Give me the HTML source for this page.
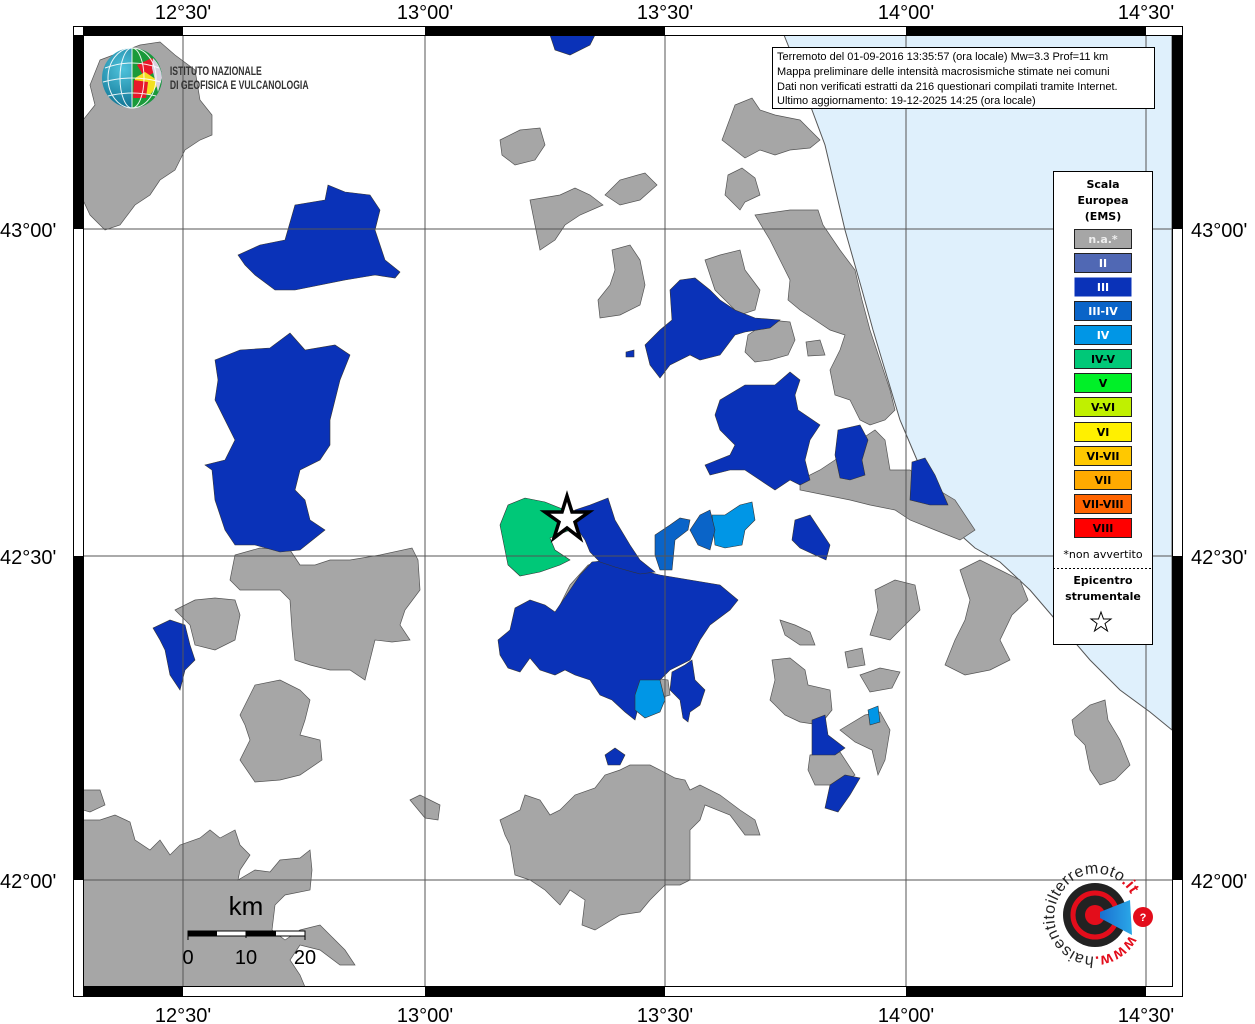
<!DOCTYPE html>
<html><head><meta charset="utf-8"><style>
html,body{margin:0;padding:0;background:#fff;}
svg{display:block;font-family:"Liberation Sans",sans-serif;}
</style></head><body>
<svg width="1255" height="1024" viewBox="0 0 1255 1024" xmlns="http://www.w3.org/2000/svg">
<defs>
<clipPath id="map"><rect x="83" y="35" width="1089" height="952"/></clipPath>
<radialGradient id="glb" cx="0.35" cy="0.35" r="0.7"><stop offset="0" stop-color="#4fc3dc"/><stop offset="1" stop-color="#0b6e8e"/></radialGradient>
<linearGradient id="cone" x1="0" x2="1"><stop offset="0" stop-color="#1a6fd0"/><stop offset="1" stop-color="#2aa8e8"/></linearGradient>
<path id="circ" d="M1129.6,935 A40,40 0 1,1 1060.4,895 A40,40 0 1,1 1129.6,935"/>
</defs>
<g clip-path="url(#map)">
<rect x="83" y="35" width="1089" height="952" fill="#fff"/>
<polygon fill="#dff0fc" stroke="#555" stroke-width="1" points="784,35 800,75 812,110 825,145 845,230 862,290 873,330 885,370 900,420 917,460 935,500 955,530 975,548 1000,562 1030,590 1060,625 1090,660 1120,690 1150,712 1172,730 1172,35"/>
<g fill="#a6a6a6" stroke="#555" stroke-width="0.7">
<polygon points="100,60 140,45 160,42 175,55 195,70 200,100 212,115 212,135 200,140 185,150 175,170 160,180 150,195 135,205 120,225 105,230 90,215 83,200 83,120 95,105 90,85"/>
<polygon points="500,140 520,130 540,128 545,145 535,160 515,165 502,155"/>
<polygon points="530,200 560,195 575,188 590,195 603,205 580,215 565,225 555,240 540,250 535,225"/>
<polygon points="605,195 620,180 645,173 657,185 640,200 620,205"/>
<polygon points="612,250 630,245 640,260 645,285 640,305 620,315 600,318 598,300 610,285 615,270"/>
<polygon points="735,105 752,98 760,110 775,115 800,120 820,140 810,148 790,150 775,155 760,150 745,158 722,140"/>
<polygon points="728,175 742,168 755,178 760,195 745,202 740,210 725,195"/>
<polygon points="755,215 790,210 818,210 823,225 840,250 855,270 862,300 870,330 880,360 890,390 895,410 885,420 870,425 860,420 850,400 835,395 830,370 840,350 845,335 830,330 815,320 800,310 788,300 790,280 780,260 770,240"/>
<polygon points="705,260 720,255 740,250 745,270 760,290 755,310 740,315 725,300 715,290"/>
<polygon points="748,335 770,320 790,322 795,340 788,355 770,360 755,362 745,352"/>
<polygon points="806,342 820,340 825,355 808,356"/>
<polygon points="835,460 860,440 875,430 885,440 890,470 910,470 930,485 955,500 975,530 960,540 935,530 910,520 895,510 870,505 850,500 825,495 800,490 800,480 820,470"/>
<polygon points="235,555 260,548 290,550 300,565 315,565 330,560 350,560 380,555 412,548 418,560 420,590 405,610 400,625 410,640 392,642 375,640 365,680 350,670 330,670 310,665 295,660 292,630 290,600 280,590 240,590 230,580"/>
<polygon points="175,610 195,600 215,598 235,600 240,615 235,640 215,650 195,645 190,625"/>
<polygon points="240,715 255,685 280,680 300,690 310,700 305,720 300,735 320,740 322,760 300,775 280,780 255,782 240,760 250,740 245,725"/>
<polygon points="410,800 420,795 440,805 438,820 425,818"/>
<polygon points="83,790 100,790 105,805 90,812 83,810"/>
<polygon points="83,820 100,820 115,815 130,822 135,840 150,850 160,840 170,855 180,845 200,838 210,830 220,838 235,830 240,845 250,855 240,870 238,880 255,870 270,872 280,860 300,858 310,850 312,870 310,890 285,895 275,905 272,930 285,940 300,930 320,925 345,950 355,965 340,965 320,950 300,945 290,960 300,975 305,987 83,987"/>
<polygon points="555,615 570,585 588,565 605,560 618,570 600,580 585,595 570,612 565,620"/>
<polygon points="655,678 668,680 670,695 660,698"/>
<polygon points="875,590 895,580 915,585 920,610 905,625 890,640 870,635 878,610"/>
<polygon points="960,570 980,560 1000,570 1020,580 1028,600 1012,615 1000,640 1010,660 990,670 965,675 945,665 955,640 965,620 970,600"/>
<polygon points="780,620 795,625 810,632 815,645 800,645 785,635"/>
<polygon points="845,652 862,648 865,665 848,668"/>
<polygon points="860,675 880,668 900,672 892,688 870,692"/>
<polygon points="772,660 790,658 805,670 808,685 830,690 832,710 820,725 800,722 785,715 770,700 775,680"/>
<polygon points="810,755 840,752 855,775 840,785 815,785 808,770"/>
<polygon points="840,730 865,715 880,712 890,730 885,760 878,775 872,750 855,742"/>
<polygon points="1072,720 1090,705 1105,700 1108,720 1120,740 1130,765 1115,780 1100,785 1090,770 1085,745 1075,735"/>
<polygon points="500,820 520,810 525,795 540,800 550,815 560,810 575,795 595,788 605,775 620,770 630,765 650,765 660,770 675,778 685,780 690,790 700,785 720,795 740,810 755,820 760,835 745,835 730,815 705,805 700,820 690,830 690,880 680,885 665,885 650,900 640,912 620,915 595,930 582,925 585,900 570,890 560,905 545,890 530,880 515,875 510,845 505,835"/>
</g>
<g fill="#0a32b8" stroke="#333" stroke-width="0.6">
<polygon points="550,35 595,35 590,45 570,55 555,50"/>
<polygon points="238,255 260,245 285,240 295,205 325,200 328,185 345,192 370,195 380,210 375,230 385,260 400,272 395,278 375,275 345,280 320,285 295,290 275,290 255,275 245,265"/>
<polygon points="215,360 240,350 270,348 290,333 305,350 335,345 350,355 340,380 335,400 330,420 330,445 320,460 300,470 295,490 305,500 310,520 325,530 300,550 280,552 255,545 235,545 225,530 215,500 212,470 205,465 225,460 235,440 225,420 215,400 218,380"/>
<polygon points="153,628 170,620 185,625 190,645 195,660 185,670 180,690 170,675 165,650 160,640"/>
<polygon points="555,612 570,590 580,575 592,562 610,560 620,568 640,570 660,575 690,580 720,585 738,600 730,610 710,625 700,640 690,660 670,670 660,680 645,685 640,700 635,720 625,712 612,700 600,695 590,680 575,675 565,670 555,675 540,670 530,658 520,672 508,668 500,655 498,640 510,630 515,608 530,600 545,605"/>
<polygon points="575,510 590,505 608,498 615,520 630,545 640,560 655,572 640,574 615,567 600,562 590,552 585,540 578,530"/>
<polygon points="672,672 685,665 692,660 695,680 705,690 700,705 690,712 688,722 683,718 680,700 670,690"/>
<polygon points="605,755 615,748 625,755 620,765 608,765"/>
<polygon points="670,290 680,280 695,278 710,290 720,300 735,310 755,318 780,320 770,328 745,332 735,335 720,355 700,360 690,355 670,365 660,378 650,365 645,345 660,330 672,320"/>
<polygon points="626,352 634,350 634,357 626,357"/>
<polygon points="720,400 745,385 775,385 790,372 800,380 795,395 798,410 820,425 810,440 805,460 810,480 800,485 790,480 775,490 760,480 745,470 730,470 710,475 705,465 730,455 735,445 720,430 715,415"/>
<polygon points="838,430 860,425 868,440 862,460 865,475 850,480 840,478 835,455"/>
<polygon points="912,462 925,458 935,475 948,505 930,505 910,500"/>
<polygon points="795,520 810,515 820,530 830,545 826,560 815,555 800,548 792,540"/>
<polygon points="812,720 825,715 828,735 845,748 835,755 812,755"/>
<polygon points="830,785 845,775 860,778 850,795 838,812 825,808"/>
</g>
<g stroke="#333" stroke-width="0.6">
<polygon fill="#00c878" points="508,505 525,498 545,502 565,510 575,520 570,530 550,538 555,550 570,560 560,565 540,572 520,576 508,565 503,540 500,525"/>
<polygon fill="#0096e6" points="640,680 660,680 665,700 660,712 645,718 635,710 635,695"/>
<polygon fill="#0096e6" points="712,515 725,515 740,505 752,502 755,520 745,530 742,545 725,548 715,545"/>
<polygon fill="#0096e6" points="868,710 878,706 880,722 870,725"/>
<polygon fill="#0a64c8" points="655,535 670,525 680,518 690,520 688,530 675,540 672,570 660,570 655,555"/>
<polygon fill="#0a64c8" points="700,515 710,510 715,530 710,550 698,545 690,530"/>
</g>
<g stroke="#555" stroke-width="1" fill="none">
<line x1="183" y1="35" x2="183" y2="987"/><line x1="425" y1="35" x2="425" y2="987"/><line x1="665" y1="35" x2="665" y2="987"/><line x1="906" y1="35" x2="906" y2="987"/><line x1="1146" y1="35" x2="1146" y2="987"/>
<line x1="83" y1="229" x2="1172" y2="229"/><line x1="83" y1="556" x2="1172" y2="556"/><line x1="83" y1="880" x2="1172" y2="880"/>
</g>
<polygon points="567,496 572,512 589,512 575,522 580,538 567,528 554,538 559,522 545,512 562,512" fill="#fff" stroke="#000" stroke-width="3.5"/>
</g>
<rect x="73.5" y="26.5" width="1109" height="970" fill="none" stroke="#000" stroke-width="1"/>
<rect x="83.5" y="35.5" width="1089" height="951" fill="none" stroke="#000" stroke-width="1"/>
<g fill="#000">
<rect x="83" y="26" width="100" height="9"/><rect x="425" y="26" width="240" height="9"/><rect x="906" y="26" width="240" height="9"/>
<rect x="83" y="987" width="100" height="10"/><rect x="425" y="987" width="240" height="10"/><rect x="906" y="987" width="240" height="10"/>
<rect x="73" y="35" width="10" height="194"/><rect x="73" y="556" width="10" height="324"/>
<rect x="1172" y="35" width="10" height="194"/><rect x="1172" y="556" width="10" height="324"/>
</g>
<g font-size="20" fill="#000" text-anchor="middle">
<text x="183" y="19">12°30'</text><text x="425" y="19">13°00'</text><text x="665" y="19">13°30'</text><text x="906" y="19">14°00'</text><text x="1146" y="19">14°30'</text>
<text x="183" y="1022">12°30'</text><text x="425" y="1022">13°00'</text><text x="665" y="1022">13°30'</text><text x="906" y="1022">14°00'</text><text x="1146" y="1022">14°30'</text>
</g>
<g font-size="20" fill="#000">
<text x="0" y="237">43°00'</text><text x="0" y="564">42°30'</text><text x="0" y="888">42°00'</text>
<text x="1191" y="237">43°00'</text><text x="1191" y="564">42°30'</text><text x="1191" y="888">42°00'</text>
</g>
<circle cx="132" cy="78" r="30" fill="url(#glb)"/>
<path d="M132,48 A30,30 0 0,1 162,78 A30,30 0 0,1 132,108 Z" fill="#1a9a3a"/>
<path d="M137,65 L152,58 L158,70 L145,78 Z" fill="#e8182a"/>
<path d="M135,78 L145,72 L160,82 L150,95 L135,92 Z" fill="#f3e020"/>
<path d="M134,80 L148,82 L146,98 L133,98 Z" fill="#e8182a"/>
<path d="M153,58 A30,30 0 0,1 162,78 L158,92 L152,68 Z" fill="#d8d0e0"/>
<g stroke="#fff" stroke-width="1" fill="none" opacity="0.9">
<ellipse cx="132" cy="78" rx="12" ry="30"/><ellipse cx="132" cy="78" rx="24" ry="30"/><line x1="132" y1="48" x2="132" y2="108"/>
<path d="M105,68 Q132,58 159,68"/><path d="M103,82 Q132,74 161,82"/><path d="M108,96 Q132,90 156,96"/>
</g>
<g font-size="12" fill="#333" font-weight="bold" transform="scale(0.72,1)">
<text x="236" y="75">ISTITUTO NAZIONALE</text><text x="236" y="89">DI GEOFISICA E VULCANOLOGIA</text>
</g>
<rect x="772.5" y="47.5" width="382" height="61" fill="#fff" stroke="#000"/>
<g font-size="11" fill="#000">
<text x="777" y="60">Terremoto del 01-09-2016 13:35:57 (ora locale) Mw=3.3 Prof=11 km</text>
<text x="777" y="75">Mappa preliminare delle intensità macrosismiche stimate nei comuni</text>
<text x="777" y="90">Dati non verificati estratti da 216 questionari compilati tramite Internet.</text>
<text x="777" y="104">Ultimo aggiornamento: 19-12-2025 14:25 (ora locale)</text>
</g>
<rect x="1053.5" y="171.5" width="99" height="473" fill="#fff" stroke="#000"/>
<g font-family="DejaVu Sans,sans-serif" font-size="11" font-weight="bold" text-anchor="middle" fill="#000">
<text x="1103" y="188">Scala</text><text x="1103" y="204">Europea</text><text x="1103" y="220">(EMS)</text>
</g>
<g stroke="#222" stroke-width="1">
<rect x="1074.5" y="229.5" width="57" height="19" fill="#a6a6a6"/>
<rect x="1074.5" y="253.5" width="57" height="19" fill="#5068b4"/>
<rect x="1074.5" y="277.5" width="57" height="19" fill="#0a32b8" stroke="none"/>
<rect x="1074.5" y="301.5" width="57" height="19" fill="#0a64c8"/>
<rect x="1074.5" y="325.5" width="57" height="19" fill="#0096e6"/>
<rect x="1074.5" y="349.5" width="57" height="19" fill="#00c878"/>
<rect x="1074.5" y="373.5" width="57" height="19" fill="#00f028"/>
<rect x="1074.5" y="397.5" width="57" height="19" fill="#c0f000"/>
<rect x="1074.5" y="422.5" width="57" height="19" fill="#fff000"/>
<rect x="1074.5" y="446.5" width="57" height="19" fill="#ffc800"/>
<rect x="1074.5" y="470.5" width="57" height="19" fill="#ffaa00"/>
<rect x="1074.5" y="494.5" width="57" height="19" fill="#ff6400"/>
<rect x="1074.5" y="518.5" width="57" height="19" fill="#ff0000"/>
</g>
<g font-family="DejaVu Sans,sans-serif" font-size="11" font-weight="bold" text-anchor="middle">
<text x="1103" y="243" fill="#eee">n.a.*</text>
<text x="1103" y="267" fill="#fff">II</text>
<text x="1103" y="291" fill="#fff">III</text>
<text x="1103" y="315" fill="#fff">III-IV</text>
<text x="1103" y="339" fill="#fff">IV</text>
<text x="1103" y="363" fill="#000">IV-V</text>
<text x="1103" y="387" fill="#000">V</text>
<text x="1103" y="411" fill="#000">V-VI</text>
<text x="1103" y="436" fill="#000">VI</text>
<text x="1103" y="460" fill="#000">VI-VII</text>
<text x="1103" y="484" fill="#000">VII</text>
<text x="1103" y="508" fill="#000">VII-VIII</text>
<text x="1103" y="532" fill="#000">VIII</text>
</g>
<text x="1103" y="558" font-family="DejaVu Sans,sans-serif" font-size="11" text-anchor="middle" fill="#000">*non avvertito</text>
<line x1="1053" y1="568.5" x2="1152" y2="568.5" stroke="#000" stroke-dasharray="2,2"/>
<g font-family="DejaVu Sans,sans-serif" font-size="11" font-weight="bold" text-anchor="middle" fill="#000">
<text x="1103" y="584">Epicentro</text><text x="1103" y="600">strumentale</text>
</g>
<polygon points="1101,612 1103.5,619 1111,619 1105,623.5 1107.5,631 1101,626.5 1094.5,631 1097,623.5 1091,619 1098.5,619" fill="#fff" stroke="#000" stroke-width="1"/>
<text x="246" y="915" font-size="26" text-anchor="middle">km</text>
<rect x="188" y="931" width="117" height="5" fill="#fff" stroke="#000"/>
<rect x="188" y="931" width="29" height="5" fill="#000"/><rect x="246" y="931" width="30" height="5" fill="#000"/>
<g stroke="#000"><line x1="188" y1="931" x2="188" y2="940"/><line x1="246" y1="931" x2="246" y2="938"/><line x1="305" y1="931" x2="305" y2="940"/></g>
<g font-size="20" text-anchor="middle"><text x="188" y="964">0</text><text x="246" y="964">10</text><text x="305" y="964">20</text></g>
<circle cx="1095" cy="915" r="32" fill="#222"/>
<circle cx="1095" cy="915" r="22" fill="none" stroke="#e30d1b" stroke-width="5"/>
<circle cx="1095" cy="915" r="10" fill="#e30d1b"/>
<polygon points="1100,912 1130,900 1132,935 1100,918" fill="url(#cone)"/>
<circle cx="1143" cy="917" r="10" fill="#e30d1b"/>
<text x="1143" y="921" font-size="11" font-weight="bold" fill="#fff" text-anchor="middle">?</text>
<text font-size="16" fill="#222" textLength="215" lengthAdjust="spacing"><textPath href="#circ"><tspan fill="#e30d1b" font-weight="bold">www.</tspan>haisentitoilterremoto<tspan fill="#e30d1b" font-weight="bold">.it</tspan></textPath></text>
</svg>
</body></html>
